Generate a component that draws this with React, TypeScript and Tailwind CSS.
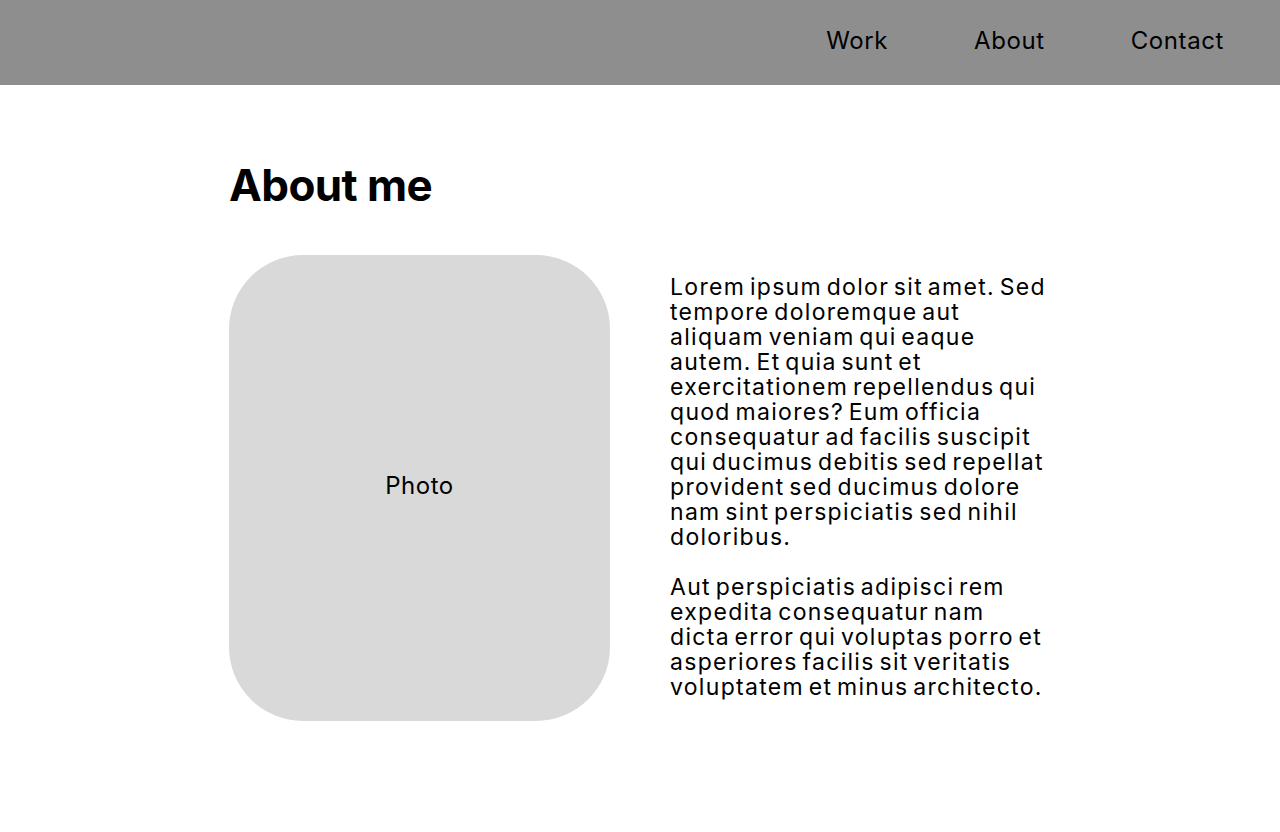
export default function App() {
  return (
    <div className="min-h-[832px] bg-white text-black" style={{ fontFamily: '"Inter", "Liberation Sans", sans-serif' }}>
      {/* Header */}
      <header className="h-[85px] bg-[#8e8e8e] flex items-center justify-end pr-[56px]">
        <nav className="flex items-center gap-[86px] text-[24px] tracking-[0.6px] pb-[3px]">
          <a href="#work">Work</a>
          <a href="#about">About</a>
          <a href="#contact">Contact</a>
        </nav>
      </header>

      {/* About */}
      <section id="about" className="pt-[78px] pl-[229px]">
        <h1 className="text-[44px] font-bold leading-none tracking-[-0.6px]">About me</h1>

        <div className="mt-[48px] flex items-start gap-[60px]">
          <div className="w-[381px] h-[466px] rounded-[74px] bg-[#d9d9d9] flex items-center justify-center">
            <span className="text-[24px] tracking-[0.5px] pb-[4px]">Photo</span>
          </div>

          <div className="w-[378px] pt-[20px] text-[23px] leading-[25px] tracking-[1.3px] [word-spacing:-3px] space-y-[25px]">
            <p>
              Lorem ipsum dolor sit amet. Sed tempore doloremque aut aliquam veniam qui eaque autem. Et quia sunt et
              exercitationem repellendus qui quod maiores? Eum officia consequatur ad facilis suscipit qui ducimus
              debitis sed repellat provident sed ducimus dolore nam sint perspiciatis sed nihil doloribus.
            </p>
            <p>
              Aut perspiciatis adipisci rem expedita consequatur nam dicta error qui voluptas porro et asperiores
              facilis sit veritatis voluptatem et minus architecto.
            </p>
          </div>
        </div>
      </section>
    </div>
  );
}
